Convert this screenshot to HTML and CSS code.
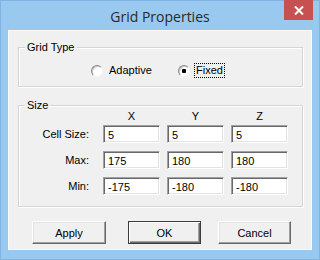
FILE: index.html
```html
<!DOCTYPE html>
<html lang="en">
    <head>
        <meta charset="UTF-8" />
        <title>Grid Properties</title>
        <link rel="stylesheet" href="styles.css">
    </head>
    <body>
        <div class="window">
            <div class="titlebar">
                <span class="title">Grid Properties</span>
                <button class="close" aria-label="Close">
                    <svg width="10" height="9" viewBox="0 0 10 9">
                        <path d="M1 0.5 L9 8.5 M9 0.5 L1 8.5" stroke="#fff" stroke-width="2" fill="none" />
                    </svg>
                </button>
            </div>

            <div class="client">
                <fieldset class="group type-group">
                    <legend>Grid Type</legend>
                    <div class="radios">
                        <label class="option">
                            <input type="radio" name="gridtype" />
                            <span>Adaptive</span>
                        </label>
                        <label class="option">
                            <input type="radio" name="gridtype" checked />
                            <span class="focused">Fixed</span>
                        </label>
                    </div>
                </fieldset>

                <fieldset class="group size-group">
                    <legend>Size</legend>
                    <div class="axes">
                        <span></span>
                        <span>X</span>
                        <span>Y</span>
                        <span>Z</span>
                    </div>
                    <div class="fields">
                        <span class="field-label">Cell Size:</span>
                        <input type="text" value="5" />
                        <input type="text" value="5" />
                        <input type="text" value="5" />

                        <span class="field-label">Max:</span>
                        <input type="text" value="175" />
                        <input type="text" value="180" />
                        <input type="text" value="180" />

                        <span class="field-label">Min:</span>
                        <input type="text" value="-175" />
                        <input type="text" value="-180" />
                        <input type="text" value="-180" />
                    </div>
                </fieldset>

                <div class="buttons">
                    <button class="btn apply">Apply</button>
                    <button class="btn ok default">OK</button>
                    <button class="btn cancel">Cancel</button>
                </div>
            </div>
        </div>
    </body>
</html>
```

FILE: styles.css
```css
*,
*::before,
*::after {
    padding: 0;
    margin: 0;
    box-sizing: border-box;
}

body {
    width: 320px;
    height: 260px;
    overflow: hidden;
    font-family: "Liberation Sans", Arial, sans-serif;
    font-size: 11px;
    color: #000;
}

.window {
    width: 320px;
    height: 260px;
    background: #99c9ef;
    border: 1px solid #7eb4e4;
}

.titlebar {
    height: 29px;
    display: grid;
    grid-template-columns: 1fr auto 1fr;

    & .title {
        grid-column: 2;
        align-self: center;
        font-family: "Open Sans", "Noto Sans", sans-serif;
        font-size: 14px;
        color: #2a2a2a;
        margin-top: 1px;
    }

    & .close {
        grid-column: 3;
        justify-self: end;
        align-self: start;
        width: 29px;
        height: 20px;
        margin-top: -1px;
        margin-right: 6px;
        border: none;
        background: #c75050;
        display: flex;
        align-items: center;
        justify-content: center;
    }
}

.client {
    margin: 0 7px;
    height: 220px;
    background: #f0f0f0;
    border: 1px solid #fafafa;
    padding: 10px 8px 0 9px;
}

.group {
    border: 1px solid #d5d5d5;
    box-shadow: inset 1px 1px 0 #fff, 1px 1px 0 #fff;
    min-inline-size: 0;
    padding: 0;

    & legend {
        line-height: 13px;
        margin-left: 6px;
        padding: 0 2px;
        background: #f0f0f0;
    }
}

.type-group {
    height: 46px;

    & .radios {
        height: 32px;
        display: flex;
        align-items: center;
        padding-left: 72px;
    }
}

.option {
    display: flex;
    align-items: center;
    gap: 4px;
    width: 87px;

    & input {
        appearance: none;
        width: 12px;
        height: 12px;
        border-radius: 50%;
        border: 1px solid;
        border-color: #8a8a8a #f4f4f4 #f4f4f4 #8a8a8a;
        box-shadow: inset 1px 1px 0 #c8c8c8;
        background: #fff;
        margin-top: 1px;
    }

    & input:checked {
        background: radial-gradient(circle, #000 0 2px, #fff 2.5px);
    }

    & span {
        padding: 1px 1px;
        border: 1px solid transparent;
        line-height: 11px;
    }

    & span.focused {
        border: 1px dotted #000;
    }
}

.size-group {
    margin-top: 12px;
    padding-bottom: 11px;

    & .axes {
        display: grid;
        grid-template-columns: 77px 57px 57px 57px;
        column-gap: 7px;
        line-height: 9px;
        padding-bottom: 4px;
        text-align: center;
    }

    & .fields {
        display: grid;
        grid-template-columns: 77px 57px 57px 57px;
        grid-auto-rows: 18px;
        column-gap: 7px;
        row-gap: 8px;
        align-items: center;
    }

    & .field-label {
        text-align: right;
        padding-right: 7px;
    }

    & input {
        height: 18px;
        width: 57px;
        font-family: inherit;
        font-size: 11px;
        color: #000;
        background: #fff;
        border: 1px solid;
        border-color: #a0a0a0 #fff #fff #a0a0a0;
        box-shadow: inset 1px 1px 0 #696969, inset -1px -1px 0 #e3e3e3;
        padding: 1px 4px 0;
        outline: none;
    }
}

.buttons {
    display: flex;
    margin-top: 14px;
    padding-left: 14px;

    & .btn {
        height: 23px;
        width: 73px;
        font-family: inherit;
        font-size: 11px;
        color: #000;
        background: #f0f0f0;
        border: 1px solid;
        border-color: #fff #696969 #696969 #fff;
        box-shadow: inset -1px -1px 0 #a0a0a0, inset 1px 1px 0 #e3e3e3;
    }

    & .apply {
        width: 74px;
    }

    & .ok {
        margin-left: 22px;
        border: 1px solid #3c3c3c;
        box-shadow: inset 1px 1px 0 #fff, inset -1px -1px 0 #696969,
            inset -2px -2px 0 #a0a0a0;
    }

    & .cancel {
        margin-left: 17px;
    }
}
```
